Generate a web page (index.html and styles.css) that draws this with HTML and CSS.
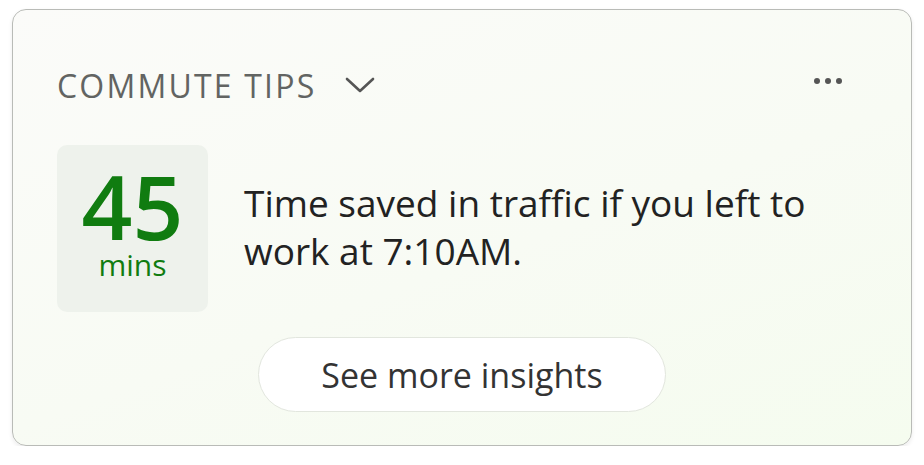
FILE: index.html
```html
<!DOCTYPE html>
<html lang="en">
<head>
  <meta charset="UTF-8">
  <title>Commute Tips</title>
  <link rel="stylesheet" href="styles.css">
</head>
<body>
  <div class="tip-card">
    <div class="tip-header">
      <div class="tip-title">
        COMMUTE TIPS
        <svg class="chevron" width="30" height="18" viewBox="0 0 30 18" fill="none">
          <path d="M2 3L15 15L28 3" stroke="#555" stroke-width="2.6" stroke-linecap="round" stroke-linejoin="round"/>
        </svg>
      </div>
      <div class="more-btn">
        <span class="dot"></span><span class="dot"></span><span class="dot"></span>
      </div>
    </div>

    <div class="tip-body">
      <div class="stat-box">
        <div class="stat-value">45</div>
        <div class="stat-unit">mins</div>
      </div>
      <div class="tip-text">Time saved in traffic if you left to work at 7:10AM.</div>
    </div>

    <div class="tip-footer">
      <button class="insights-btn">See more insights</button>
    </div>
  </div>
</body>
</html>
```

FILE: styles.css
```css
body {
  margin: 0;
  padding: 9px 12px 0 12px;
  background-color: #ffffff;
  font-family: 'Open Sans', 'Noto Sans', sans-serif;
}

.tip-card {
  width: 900px;
  height: 437px;
  box-sizing: border-box;
  border: 1.5px solid #b9bbb7;
  border-radius: 14px;
  background: linear-gradient(160deg, #fbfbf9 0%, #f8fbf4 55%, #f5fcef 100%);
  box-shadow: 0 2px 4px rgba(0, 0, 0, 0.08);
  padding: 50px 44px 0 44px;
  display: flex;
  flex-direction: column;
}

.tip-header {
  display: flex;
  align-items: center;
  justify-content: space-between;
  height: 50px;
}

.tip-title {
  display: flex;
  align-items: center;
  gap: 29px;
  font-size: 32px;
  color: #626462;
  letter-spacing: 2.2px;
}

.more-btn {
  display: flex;
  gap: 5px;
  margin-right: 25px;
  margin-bottom: 9px;
}

.dot {
  width: 6px;
  height: 6px;
  border-radius: 50%;
  background-color: #555;
}

.tip-body {
  display: flex;
  align-items: center;
  gap: 36px;
  margin-top: 35px;
}

.stat-box {
  width: 151px;
  height: 167px;
  border-radius: 10px;
  background-color: #eef2ec;
  display: flex;
  flex-direction: column;
  align-items: center;
  justify-content: center;
  color: #107c10;
}

.stat-value {
  font-size: 89px;
  font-weight: 600;
  line-height: 74px;
  margin-top: -6px;
}

.stat-unit {
  font-size: 30px;
  line-height: 34px;
  margin-top: 5px;
}

.tip-text {
  font-size: 37px;
  line-height: 48px;
  color: #222222;
  width: 600px;
  margin-top: -4px;
}

.tip-footer {
  display: flex;
  justify-content: center;
  margin-top: 25px;
}

.insights-btn {
  width: 408px;
  height: 75px;
  border: 1.5px solid #e2e6de;
  border-radius: 38px;
  background-color: #ffffff;
  font-family: inherit;
  font-size: 34px;
  color: #333333;
}
```
